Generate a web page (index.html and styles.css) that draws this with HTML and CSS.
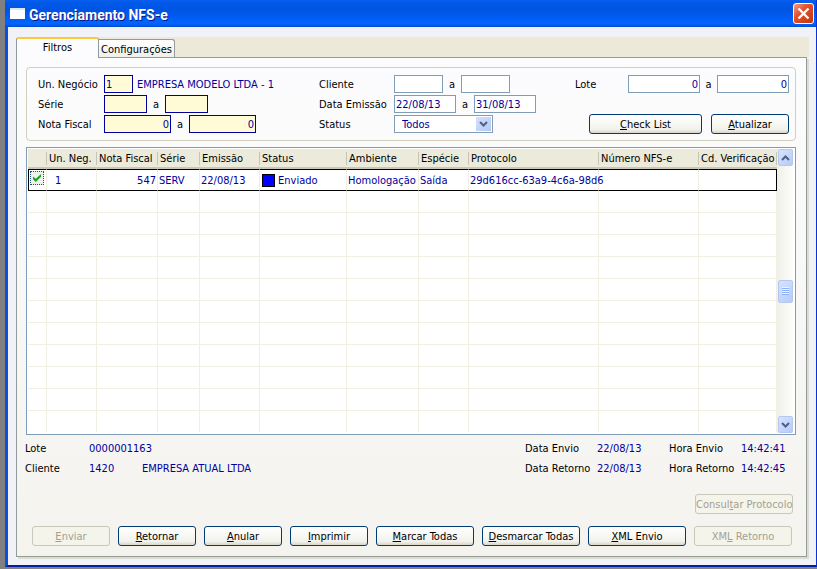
FILE: index.html
```html
<!DOCTYPE html>
<html lang="pt-BR">
<head>
    <meta charset="UTF-8">
    <meta name="viewport" content="width=device-width, initial-scale=1.0">
    <title>Gerenciamento NFS-e</title>
    <link rel="stylesheet" href="styles.css">
</head>
<body>
    <div class="window">
        <!-- Barra de título -->
        <header class="titlebar">
            <span class="window-icon"></span>
            <h1>Gerenciamento NFS-e</h1>
            <button class="close" type="button" aria-label="Fechar">
                <svg width="21" height="21" viewBox="0 0 21 21"><path d="M5.5 5.5l10 10M15.5 5.5l-10 10" stroke="#fff" stroke-width="2.4"/></svg>
            </button>
        </header>

        <main class="client">
            <!-- Abas -->
            <div class="tabs">
                <button class="tab tab-active" type="button">Filtros</button>
                <button class="tab" type="button">Configurações</button>
            </div>

            <div class="panel">
                <!-- Filtros -->
                <form class="filters">
                    <div class="filter-group group-left">
                        <div class="field">
                            <label for="unidade">Un. Negócio</label>
                            <input class="yellow w-unit" id="unidade" type="text" value="1">
                            <span class="value company">EMPRESA MODELO LTDA - 1</span>
                        </div>
                        <div class="field">
                            <label for="serie1">Série</label>
                            <input class="yellow w-serie" id="serie1" type="text">
                            <label class="to" for="serie2">a</label>
                            <input class="yellow w-serie" id="serie2" type="text">
                        </div>
                        <div class="field">
                            <label for="nota1">Nota Fiscal</label>
                            <input class="yellow w-nota right" id="nota1" type="text" value="0">
                            <label class="to" for="nota2">a</label>
                            <input class="yellow w-nota right" id="nota2" type="text" value="0">
                        </div>
                    </div>

                    <div class="filter-group group-middle">
                        <div class="field">
                            <label for="cliente1">Cliente</label>
                            <input class="w-cliente" id="cliente1" type="text">
                            <label class="to" for="cliente2">a</label>
                            <input class="w-cliente" id="cliente2" type="text">
                        </div>
                        <div class="field">
                            <label for="data1">Data Emissão</label>
                            <input class="w-data" id="data1" type="text" value="22/08/13">
                            <label class="to" for="data2">a</label>
                            <input class="w-data" id="data2" type="text" value="31/08/13">
                        </div>
                        <div class="field">
                            <label for="status">Status</label>
                            <div class="select">
                                <select id="status">
                                    <option>Todos</option>
                                </select>
                                <span class="arrow">
                                    <svg width="9" height="6" viewBox="0 0 9 6"><path d="M1 1l3.500 3.500L8 1" fill="none" stroke="#4d6185" stroke-width="2"/></svg>
                                </span>
                            </div>
                        </div>
                    </div>

                    <div class="filter-group group-right">
                        <div class="field">
                            <label for="lote1">Lote</label>
                            <input class="w-lote right" id="lote1" type="text" value="0">
                            <label class="to" for="lote2">a</label>
                            <input class="w-lote right" id="lote2" type="text" value="0">
                        </div>
                        <div class="filter-buttons">
                            <button class="btn btn-check" type="button"><u>C</u>heck List</button>
                            <button class="btn" type="button"><u>A</u>tualizar</button>
                        </div>
                    </div>
                </form>

                <!-- Notas -->
                <div class="grid">
                    <table>
                        <colgroup>
                            <col class="c-mark"><col class="c-unit"><col class="c-nota"><col class="c-serie"><col class="c-data"><col class="c-status"><col class="c-amb"><col class="c-esp"><col class="c-prot"><col class="c-num"><col>
                        </colgroup>
                        <thead>
                            <tr>
                                <th></th><th>Un. Neg.</th><th>Nota Fiscal</th><th>Série</th><th>Emissão</th><th>Status</th><th>Ambiente</th><th>Espécie</th><th>Protocolo</th><th>Número NFS-e</th><th>Cd. Verificação</th>
                            </tr>
                        </thead>
                        <tbody>
                            <tr class="selected">
                                <td class="mark"><input type="checkbox" aria-label="Selecionar nota" checked></td>
                                <td class="unit">1</td>
                                <td class="number">547</td>
                                <td>SERV</td>
                                <td>22/08/13</td>
                                <td><span class="status"><span class="status-color"></span>Enviado</span></td>
                                <td>Homologação</td>
                                <td>Saída</td>
                                <td class="protocol-key">29d616cc-63a9-4c6a-98d6</td>
                                <td></td>
                                <td></td>
                            </tr>
                            <tr><td></td><td></td><td></td><td></td><td></td><td></td><td></td><td></td><td></td><td></td><td></td></tr>
                            <tr><td></td><td></td><td></td><td></td><td></td><td></td><td></td><td></td><td></td><td></td><td></td></tr>
                            <tr><td></td><td></td><td></td><td></td><td></td><td></td><td></td><td></td><td></td><td></td><td></td></tr>
                            <tr><td></td><td></td><td></td><td></td><td></td><td></td><td></td><td></td><td></td><td></td><td></td></tr>
                            <tr><td></td><td></td><td></td><td></td><td></td><td></td><td></td><td></td><td></td><td></td><td></td></tr>
                            <tr><td></td><td></td><td></td><td></td><td></td><td></td><td></td><td></td><td></td><td></td><td></td></tr>
                            <tr><td></td><td></td><td></td><td></td><td></td><td></td><td></td><td></td><td></td><td></td><td></td></tr>
                            <tr><td></td><td></td><td></td><td></td><td></td><td></td><td></td><td></td><td></td><td></td><td></td></tr>
                            <tr><td></td><td></td><td></td><td></td><td></td><td></td><td></td><td></td><td></td><td></td><td></td></tr>
                            <tr><td></td><td></td><td></td><td></td><td></td><td></td><td></td><td></td><td></td><td></td><td></td></tr>
                            <tr><td></td><td></td><td></td><td></td><td></td><td></td><td></td><td></td><td></td><td></td><td></td></tr>
                        </tbody>
                    </table>
                    <div class="scrollbar">
                        <button class="scroll-btn" type="button" aria-label="Subir">
                            <svg width="9" height="6" viewBox="0 0 9 6"><path d="M1 5l3.500-3.500L8 5" fill="none" stroke="#4d6185" stroke-width="2"/></svg>
                        </button>
                        <div class="thumb"><span></span></div>
                        <button class="scroll-btn" type="button" aria-label="Descer">
                            <svg width="9" height="6" viewBox="0 0 9 6"><path d="M1 1l3.500 3.500L8 1" fill="none" stroke="#4d6185" stroke-width="2"/></svg>
                        </button>
                    </div>
                </div>

                <!-- Detalhes da nota selecionada -->
                <div class="details">
                    <span>Lote</span><span class="value">0000001163</span><span></span>
                    <span>Data Envio</span><span class="value">22/08/13</span><span>Hora Envio</span><span class="value">14:42:41</span>
                    <span>Cliente</span><span class="value">1420</span><span class="value">EMPRESA ATUAL LTDA</span>
                    <span>Data Retorno</span><span class="value">22/08/13</span><span>Hora Retorno</span><span class="value">14:42:45</span>
                </div>

                <div class="protocol">
                    <button class="btn btn-wide" type="button" disabled>Consul<u>t</u>ar Protocolo</button>
                </div>

                <!-- Ações -->
                <div class="actions">
                    <button class="btn" type="button" disabled><u>E</u>nviar</button>
                    <button class="btn" type="button"><u>R</u>etornar</button>
                    <button class="btn" type="button"><u>A</u>nular</button>
                    <button class="btn" type="button"><u>I</u>mprimir</button>
                    <button class="btn btn-wide" type="button"><u>M</u>arcar Todas</button>
                    <button class="btn btn-wide" type="button"><u>D</u>esmarcar Todas</button>
                    <button class="btn btn-wide" type="button"><u>X</u>ML Envio</button>
                    <button class="btn btn-wide" type="button" disabled>XM<u>L</u> Retorno</button>
                </div>
            </div>
        </main>
    </div>
</body>
</html>
```

FILE: styles.css
```css
* {
    box-sizing: border-box;
}

body {
    margin: 0;
    min-height: 100vh;
    display: flex;
    padding: 0 0 2px 5px;
    background: #808080;
    color: #000;
    font-family: "DejaVu Sans Condensed", "Noto Sans", sans-serif;
    font-size: 11px;
    line-height: 14px;
    white-space: nowrap;
}

button, input, select {
    margin: 0;
    font: inherit;
    color: inherit;
}

/* Janela */
.window {
    flex: 1;
    min-width: 0;
    display: flex;
    flex-direction: column;
    background: #f1f2f8;
    border-left: 3px solid #0a50e0;
    border-right: 1px solid #0831d9;
    border-bottom: 2px solid #001ea0;
}

.titlebar {
    display: flex;
    align-items: center;
    height: 27px;
    margin-left: -3px;
    padding: 0 2px 0 5px;
    background: linear-gradient(#0a5ff0 0, #0058e6 3px, #0054e3 10px, #0060fa 20px, #0066ff 24px, #0048d0 27px);
}

.window-icon {
    width: 15px;
    height: 11px;
    background: #fff;
    border-top: 2px solid #d8e6fa;
}

h1 {
    flex: 1;
    margin: 2px 0 0 4px;
    color: #fff;
    font-family: Roboto, "Open Sans", sans-serif;
    font-size: 14px;
    font-weight: bold;
    line-height: 18px;
    text-shadow: 1px 1px 0 #0a1883;
}

.close {
    width: 21px;
    height: 21px;
    padding: 0;
    border: 1px solid #fff;
    border-radius: 3px;
    background: linear-gradient(135deg, #f0a088, #e0502c 40%, #c23510);
}

.close svg {
    display: block;
    margin: -1px;
}

.client {
    flex: 1;
    display: flex;
    flex-direction: column;
    padding: 10px 7px 8px 8px;
}

/* Abas */
.tabs {
    display: flex;
    align-items: flex-end;
    height: 20px;
    background: #ece9d8;
}

.tab {
    height: 18px;
    padding: 2px 2px 0;
    border: 1px solid #919b9c;
    border-bottom: 0;
    border-left: 0;
    border-radius: 0 3px 0 0;
    background: linear-gradient(#fff, #f0f0ea);
}

.tab-active {
    z-index: 1;
    width: 83px;
    height: 21px;
    margin-bottom: -1px;
    padding: 0 0 2px;
    border-left: 1px solid #919b9c;
    border-top: 2px solid #ffc73c;
    border-radius: 3px 3px 0 0;
    background: #fcfcfe;
}

.panel {
    flex: 1;
    display: flex;
    flex-direction: column;
    margin-right: 2px;
    padding: 9px 10px 9px 9px;
    border: 1px solid #919b9c;
    background: linear-gradient(#fcfcfe, #f4f3ee);
    box-shadow: 2px 2px 0 #dedccd;
}

/* Filtros */
.filters {
    display: flex;
    padding: 7px 6px 6px 11px;
    border: 1px solid #d0d0bf;
    border-radius: 4px;
}

.filter-group {
    display: flex;
    flex-direction: column;
    gap: 2px;
}

.group-middle {
    margin: 0 39px 0 auto;
}

.field {
    display: flex;
    align-items: center;
    height: 18px;
}

.field label, .company {
    padding-top: 1px;
}

.group-left .field > label:first-child {
    width: 66px;
}

.group-middle .field > label:first-child {
    width: 75px;
}

.group-right .field > label:first-child {
    width: 53px;
}

.field .to {
    width: 18px;
    text-align: center;
}

.group-right .field .to {
    width: 17px;
}

input[type="text"] {
    height: 18px;
    padding: 1px 1px 0;
    border: 1px solid #7f9db9;
    background: #fff;
    color: #00009c;
}

input.yellow {
    border-color: #00009c;
    background: #fffbd6;
}

input.right {
    text-align: right;
}

.w-unit { width: 29px; }
.w-serie { width: 43px; }
.w-nota { width: 67px; }
.w-cliente { width: 49px; }
.w-data { width: 62px; }
.w-lote { width: 72px; }

.value {
    color: #00009c;
}

.company {
    margin-left: 4px;
}

.select {
    position: relative;
    width: 99px;
}

select {
    display: block;
    width: 100%;
    height: 18px;
    padding: 1px 18px 0 7px;
    border: 1px solid #7f9db9;
    border-radius: 0;
    background: #fff;
    color: #00009c;
    appearance: none;
}

.arrow {
    position: absolute;
    top: 2px;
    right: 2px;
    display: flex;
    align-items: center;
    justify-content: center;
    width: 15px;
    height: 14px;
    background: linear-gradient(135deg, #d4e0fd, #b4c8f6);
    pointer-events: none;
}

.filter-buttons {
    display: flex;
    justify-content: flex-end;
    gap: 9px;
    margin-top: 19px;
}

/* Botões */
.btn {
    width: 78px;
    height: 20px;
    padding: 1px 0 0;
    border: 1px solid #003c74;
    border-radius: 3px;
    background: linear-gradient(#fff, #f2f2ec 80%, #d9d5c8);
}

.btn-wide {
    width: 98px;
}

.btn-check {
    width: 113px;
}

.btn:disabled {
    border-color: #c9c7ba;
    background: #f5f4ea;
    color: #a1a192;
}

.filter-buttons, .protocol, .actions {
    flex-shrink: 0;
}

.filter-group.group-right {
    width: 214px;
}

/* Grade */
.grid {
    display: flex;
    margin-top: 6px;
    padding: 1px;
    border: 1px solid #7f9db9;
    background: #fff;
}

table {
    flex: 1;
    min-width: 0;
    width: 100%;
    table-layout: fixed;
    border-collapse: separate;
    border-spacing: 0;
}

.c-mark { width: 19px; }
.c-unit { width: 50px; }
.c-nota { width: 61px; }
.c-serie { width: 42px; }
.c-data { width: 60px; }
.c-status { width: 87px; }
.c-amb { width: 72px; }
.c-esp { width: 50px; }
.c-prot { width: 130px; }
.c-num { width: 100px; }

th {
    height: 20px;
    padding: 2px 0 0 2px;
    border-bottom: 2px solid #cbc7b8;
    background: linear-gradient(#c7c5b2, #c7c5b2) right center / 1px 13px no-repeat #ebeadb;
    font-weight: normal;
    text-align: left;
    overflow: hidden;
}

td {
    height: 22px;
    padding: 1px 1px 0;
    border-right: 1px solid #f1efe2;
    border-bottom: 1px solid #f1efe2;
    color: #00009c;
    overflow: hidden;
}

tbody tr:last-child td {
    border-bottom-color: #fff;
}

.selected td {
    border-top: 1px solid #000;
    border-bottom: 1px solid #000;
}

.selected td:first-child {
    border-left: 1px solid #000;
}

.selected td:last-child {
    border-right: 1px solid #000;
}

td.unit {
    padding-left: 8px;
}

.number {
    text-align: right;
}

td.protocol-key {
    overflow: visible;
}

td.mark {
    padding: 0 1px;
}

input[type="checkbox"] {
    display: block;
    width: 14px;
    height: 14px;
    margin-bottom: 4px;
    border: 1px dotted #1c5180;
    background: #eef0ee;
    appearance: none;
}

input[type="checkbox"]:checked::before {
    content: "";
    display: block;
    width: 8px;
    height: 8px;
    margin: 2px;
    background: #21a121;
    clip-path: polygon(0 30%, 35% 60%, 100% 0, 100% 35%, 35% 100%, 0 65%);
}

.status {
    display: flex;
    align-items: center;
    gap: 3px;
    padding-left: 1px;
}

.status-color {
    width: 13px;
    height: 13px;
    border: 1px solid #000;
    background: #0000ff;
}

/* Barra de rolagem */
.scrollbar {
    display: flex;
    flex-direction: column;
    justify-content: space-between;
    align-items: center;
    width: 17px;
    background: linear-gradient(90deg, #f0f0ea, #fefefb);
}

.scroll-btn, .thumb {
    display: flex;
    align-items: center;
    justify-content: center;
    width: 15px;
    height: 17px;
    padding: 0;
    border: 1px solid #b4c8f0;
    border-radius: 2px;
    background: linear-gradient(135deg, #d6e2fe, #b8cbf6);
}

.thumb {
    height: 23px;
}

.thumb span {
    width: 7px;
    height: 8px;
    background: repeating-linear-gradient(#eef4fe 0 1px, #8cb0f8 1px 2px);
}

/* Detalhes */
.details {
    display: grid;
    grid-template-columns: 64px 53px 1fr 72px 72px 72px 55px;
    row-gap: 6px;
    margin: 7px 0 0 -1px;
}

.protocol {
    display: flex;
    justify-content: flex-end;
    margin-top: 18px;
    padding-right: 3px;
}

.actions {
    display: flex;
    gap: 8px;
    margin: 12px 0 0 6px;
}
```
